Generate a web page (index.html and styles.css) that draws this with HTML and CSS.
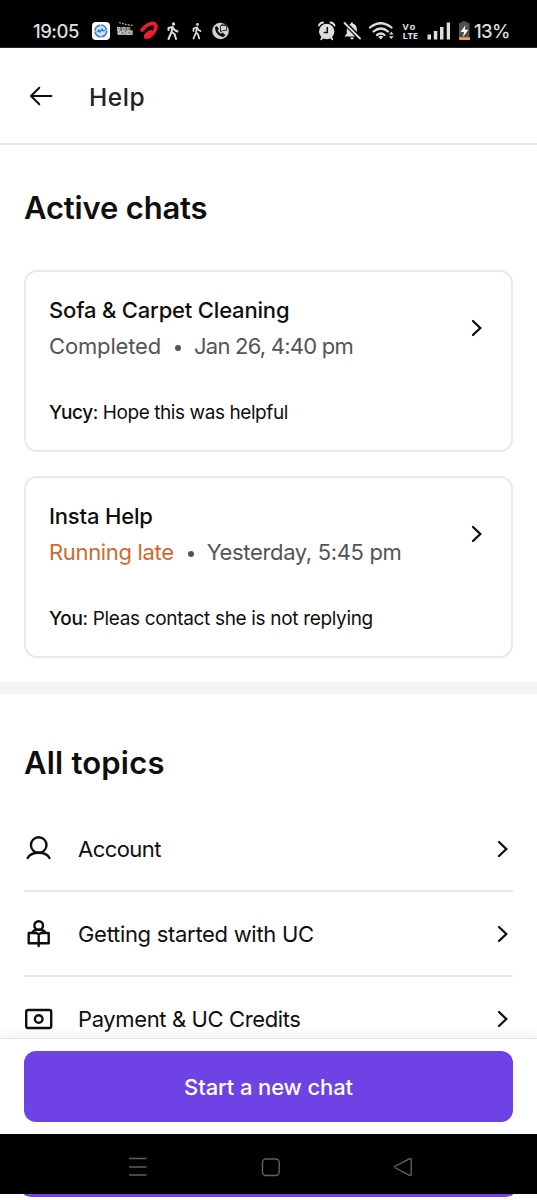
FILE: index.html
```html
<!DOCTYPE html>
<html lang="en">
<head>
<meta charset="utf-8">
<title>Help</title>
<link rel="stylesheet" href="styles.css">
</head>
<body>
<div class="screen">
  <div class="status">
    <span class="clock">19:05</span>
    <svg class="status-left" width="142" height="24" viewBox="90 19 142 24">
      <rect x="92" y="22" width="18" height="18" rx="4" fill="#fff"/>
      <circle cx="100.800" cy="31" r="5.800" fill="#d3e5f8" stroke="#3f7fd4" stroke-width="1.800" stroke-dasharray="8 1"/>
      <path d="M97 32l2-2 1 2 2-3 1 2 2-1" fill="none" stroke="#2e6dc4" stroke-width="1.200"/>
      <path d="M119 22.500l3 1 4 1 7 1" fill="none" stroke="#b89c78" stroke-width="1.300" stroke-dasharray="2 1"/>
      <path d="M117 27h13l1 3h2v5h-15.500z" fill="#666"/>
      <text x="117" y="30.800" class="movie" textLength="13">BOL</text>
      <text x="117.500" y="35" class="movie" textLength="15">MOVIES</text>
      <path d="M142 30C145 25.500 153 21.500 155.300 24.500C158 28.500 151 37 146.800 37.300C143.500 37.300 147 33 151 31.800" fill="none" stroke="#ed1c2e" stroke-width="3.600" stroke-linecap="round"/>
      <g fill="none" stroke="#dedede" stroke-width="2" stroke-linecap="round" stroke-linejoin="round">
        <circle cx="173.500" cy="24" r="1" fill="#dedede" stroke-width="1.300"/>
        <path d="M168.500 30v-2l4-1 2 3 3 1.500M172.500 27l-1 5-3 7M171.500 32l3 2 1.500 5"/>
        <g stroke-width="1.700"><circle cx="197.500" cy="24.500" r=".8" stroke-width="1.200"/><path d="M193.500 31v-2.500l3.500-1.200 1.500 2.700 2 1M197 27.500l-1 5-2.500 6M196 32.500l2 1.800 1.300 4.200"/></g>
      </g>
      <circle cx="220.500" cy="31" r="8.300" fill="#d4d4d4"/>
      <path d="M215 27c0 6 4 9.500 8.500 10l2-2-3-2.500-1.800 1.300-3-3 1.300-1.800-2-3z" fill="#111"/>
      <path d="M220.500 25.500h6v5h-4l-2 1.500zM222 25.500v-1.500h3v1.500" fill="#d4d4d4" stroke="#222" stroke-width=".9"/>
    </svg>
    <svg class="status-right" width="156" height="24" viewBox="316 19 156 24">
      <g fill="none" stroke="#dedede" stroke-width="2" stroke-linecap="round">
        <circle cx="326.700" cy="31.500" r="6.700" fill="#dedede"/>
        <path d="M319 25.500q1-2.800 4-3M334.500 25.500q-1-2.800-4-3M322.500 37.500l-1.200 1.700M331 37.500l1.200 1.700" />
        <path d="M327.300 27.500v5h-3" stroke="#111" stroke-width="1.500"/>
      </g>
      <path d="M344.500 36.500l2.300-3v-4.500c0-3 1.700-4.700 4-5.200v-1.300h2v1.300c2.500.5 4 2.300 4 5.200v4.500l2.200 3zM350 37.500h4q-.5 2-2 2t-2-2z" fill="#dedede"/>
      <path d="M344 22l17 17.500" stroke="#000" stroke-width="4.500"/>
      <path d="M344.500 23l15.500 15.500" stroke="#dedede" stroke-width="1.800" stroke-linecap="round"/>
      <g fill="none" stroke="#dedede" stroke-width="2.200" stroke-linecap="round"><path d="M370 27.500q10.700-8.500 21.500 0M373.500 31.500q7.500-6 14.500 0M377 35q4-3 7.500 0"/></g>
      <path d="M378.300 36.700q2.500-1.800 5 0l-2.500 2.800z" fill="#dedede"/>
      <path d="M389 34.500l2.300-2.700 2.300 2.700zm0 1.800l2.300 2.700 2.300-2.700z" fill="#dedede"/>
      <text x="402.500" y="29.500" class="volte" textLength="13">Vo</text><text x="402.500" y="39.300" class="volte" textLength="15.500">LTE</text>
      <path d="M427.500 34.500h3.500v5h-3.500zm6.300-3.500h3.500v8.500h-3.500zm6.200-4h3.500v12.500H440zm6.700-4.500h3.300v17h-3.300z" fill="#dedede"/>
      <rect x="459" y="22.500" width="10.500" height="17" rx="1.500" fill="#505050"/><path d="M462 21.200h4.500v2H462z" fill="#505050"/><path d="M459 37.300h11v2.700h-10q-1 0-1-1z" fill="#f5a61d"/>
      <path d="M465.500 25l-5 7h3.500l-1 5 5.300-7.200h-3.500z" fill="#fff"/>
    </svg>
    <span class="battery">13%</span>
  </div>
  <header class="header">
    <svg width="24" height="24" viewBox="0 0 24 24" class="line-icon back"><path d="M22.500 12H2.500M10.300 3.800L2 12l8.300 8.200"/></svg>
    <h1 class="title">Help</h1>
  </header>
  <main class="content">
    <section class="chats">
      <h2 class="heading">Active chats</h2>
      <article class="card">
        <div class="card-top">
          <div>
            <h3 class="card-title">Sofa &amp; Carpet Cleaning</h3>
            <p class="meta"><span class="completed">Completed</span><i class="dot"></i><span class="date numeric">Jan 26, 4:40 pm</span></p>
          </div>
          <svg class="line-icon chevron" width="12" height="18" viewBox="0 0 12 18"><path d="M2 2l7.300 7L2 16"/></svg>
        </div>
        <p class="message yucy"><b>Yucy</b>: Hope this was helpful</p>
      </article>
      <article class="card">
        <div class="card-top">
          <div>
            <h3 class="card-title">Insta Help</h3>
            <p class="meta"><span class="late">Running late</span><i class="dot"></i><span class="date">Yesterday, 5:45 pm</span></p>
          </div>
          <svg class="line-icon chevron" width="12" height="18" viewBox="0 0 12 18"><path d="M2 2l7.300 7L2 16"/></svg>
        </div>
        <p class="message"><b>You</b>: Pleas contact she is not replying</p>
      </article>
    </section>
    <section class="topics">
      <h2 class="heading topics-heading">All topics</h2>
      <div class="topic">
        <svg class="line-icon" width="30" height="30" viewBox="0 0 30 30"><circle cx="14.700" cy="11" r="7.800"/><path d="M3.700 24C7.500 17 21.800 17 25.500 24"/></svg>
        <span class="topic-name account">Account</span>
        <svg class="line-icon chevron" width="12" height="18" viewBox="0 0 12 18"><path d="M2 2l7.300 7L2 16"/></svg>
      </div>
      <div class="topic">
        <svg class="line-icon" width="30" height="30" viewBox="0 0 30 30"><circle cx="14.700" cy="6.500" r="4.300"/><path d="M8 14c1.300-4.500 12-4.500 13.400 0M14.700 15.500L12.500 14H4.700v10.300h8.500l1.500 1 1.500-1h8.500V14h-7.800zM14.700 15.500v11.500"/></svg>
        <span class="topic-name getting">Getting started with UC</span>
        <svg class="line-icon chevron" width="12" height="18" viewBox="0 0 12 18"><path d="M2 2l7.300 7L2 16"/></svg>
      </div>
      <div class="topic">
        <svg class="line-icon" width="30" height="30" viewBox="0 0 30 30"><rect x="2.200" y="6" width="25" height="18" rx="1.800"/><circle cx="14.700" cy="15" r="3.800"/></svg>
        <span class="topic-name payment">Payment &amp; UC Credits</span>
        <svg class="line-icon chevron" width="12" height="18" viewBox="0 0 12 18"><path d="M2 2l7.300 7L2 16"/></svg>
      </div>
    </section>
  </main>
  <footer class="actions"><button class="start">Start a new chat</button></footer>
  <nav class="system-nav">
    <svg width="537" height="60" viewBox="0 0 537 60" fill="none" stroke="#606060" stroke-width="1.400">
      <path d="M129 24.500h17.500M129 33h17.500M129 41h17.500"/>
      <rect x="262.500" y="25" width="16.700" height="16.500" rx="3.500"/>
      <path d="M395.500 32q-1.500 1 0 2l13.700 7.200q2 1 2-1V26q0-2-2-1z"/>
    </svg>
  </nav>
  <div class="underlay"><div class="underlay-button"></div></div>
</div>
</body>
</html>
```

FILE: styles.css
```css
* { box-sizing: border-box; }
body { margin: 0; font-family: Inter, "Liberation Sans", sans-serif; color: #0f0f0f; background: #fff; }
h1, h2, h3, p { margin: 0; font-weight: 400; }
.screen { width: 537px; height: 1200px; display: flex; flex-direction: column; overflow: hidden; }
.status { height: 48px; flex: none; background: #000; border-bottom: 1px solid #282328; color: #dedede; display: flex; align-items: center; padding: 15px 0 0 33px; }
.status svg { flex: none; }
.clock { width: 57px; font-size: 18.5px; font-weight: 500; letter-spacing: -.5px; white-space: nowrap; }
.status-right { margin-left: 84px; }
.battery { margin-left: 2px; font-size: 18.5px; font-weight: 500; letter-spacing: -.7px; }
.movie { font: 700 4.5px "Liberation Sans", sans-serif; fill: #ddd; }
.volte { font: 700 9.5px "Open Sans", sans-serif; fill: #dedede; }
.header { height: 97px; flex: none; border-bottom: 2px solid #e5e5e5; display: flex; align-items: center; padding: 0 29px; gap: 36px; }
.title { font-size: 24.5px; line-height: 32px; font-weight: 500; letter-spacing: .6px; color: #222; padding-top: 2px; }
.line-icon { flex: none; fill: none; stroke: #0f0f0f; stroke-width: 2.4; stroke-linecap: round; stroke-linejoin: round; }
.back { stroke-width: 2; }
.chevron { stroke-width: 2.3; stroke-linejoin: miter; }
.content { flex: 1; min-height: 0; overflow: hidden; }
.chats { height: 549px; padding: 42px 24px 24px; border-bottom: 12px solid #f4f4f4; }
.heading { font-size: 31px; line-height: 42px; font-weight: 600; letter-spacing: -.17px; }
.chats .heading { margin-bottom: 41px; }
.card { height: 182px; border: 2px solid #e9e9e9; border-radius: 13px; padding: 19px 28px 0 23px; }
.card + .card { margin-top: 24px; }
.card-top { display: flex; align-items: center; justify-content: space-between; height: 74px; }
.card-title { font-size: 22px; line-height: 36px; font-weight: 500; letter-spacing: -.18px; white-space: nowrap; }
.meta { display: flex; align-items: center; font-size: 22px; line-height: 36px; color: #545454; white-space: nowrap; }
.dot { width: 6px; height: 6px; border-radius: 50%; background: #545454; margin: 4px 13px 0 14px; }
.completed { letter-spacing: -.15px; }
.date { letter-spacing: -.35px; }
.date.numeric { letter-spacing: -.78px; }
.late { color: #d0692f; letter-spacing: -.33px; }
.message { margin-top: 32px; font-size: 19px; line-height: 32px; letter-spacing: -.33px; white-space: nowrap; }
.message.yucy { letter-spacing: -.42px; }
.message b { font-weight: 500; }
.topics { padding: 48px 24px 0; }
.topics-heading { margin-bottom: 23px; letter-spacing: .2px; }
.topic { height: 85px; display: flex; align-items: center; border-bottom: 2px solid #e5e5e5; padding: 1px 4px 0 0; }
.topic-name { flex: 1; margin-left: 24px; font-size: 22px; line-height: 30px; white-space: nowrap; }
.account { letter-spacing: -.55px; }
.getting { letter-spacing: -.3px; }
.payment { letter-spacing: -.38px; }
.actions { position: relative; height: 96px; flex: none; background: #fff; border-top: 1px solid #e4e4e4; padding: 12px 24px; box-shadow: 0 -2px 14px rgba(0,0,0,.07); }
.start { display: block; width: 100%; height: 71px; border: 0; border-radius: 12px; background: #6e42e5; color: #fff; font: 500 22px/30px Inter, sans-serif; letter-spacing: -.12px; white-space: nowrap; padding: 0; }
.system-nav { position: relative; height: 60px; flex: none; background: #000; }
.system-nav svg { display: block; }
.underlay { height: 6px; flex: none; overflow: hidden; padding: 0 24px; display: flex; align-items: flex-start; }
.underlay-button { width: 100%; height: 3px; background: #6e42e5; border-radius: 0 0 9px 9px / 0 0 3px 3px; }
```
